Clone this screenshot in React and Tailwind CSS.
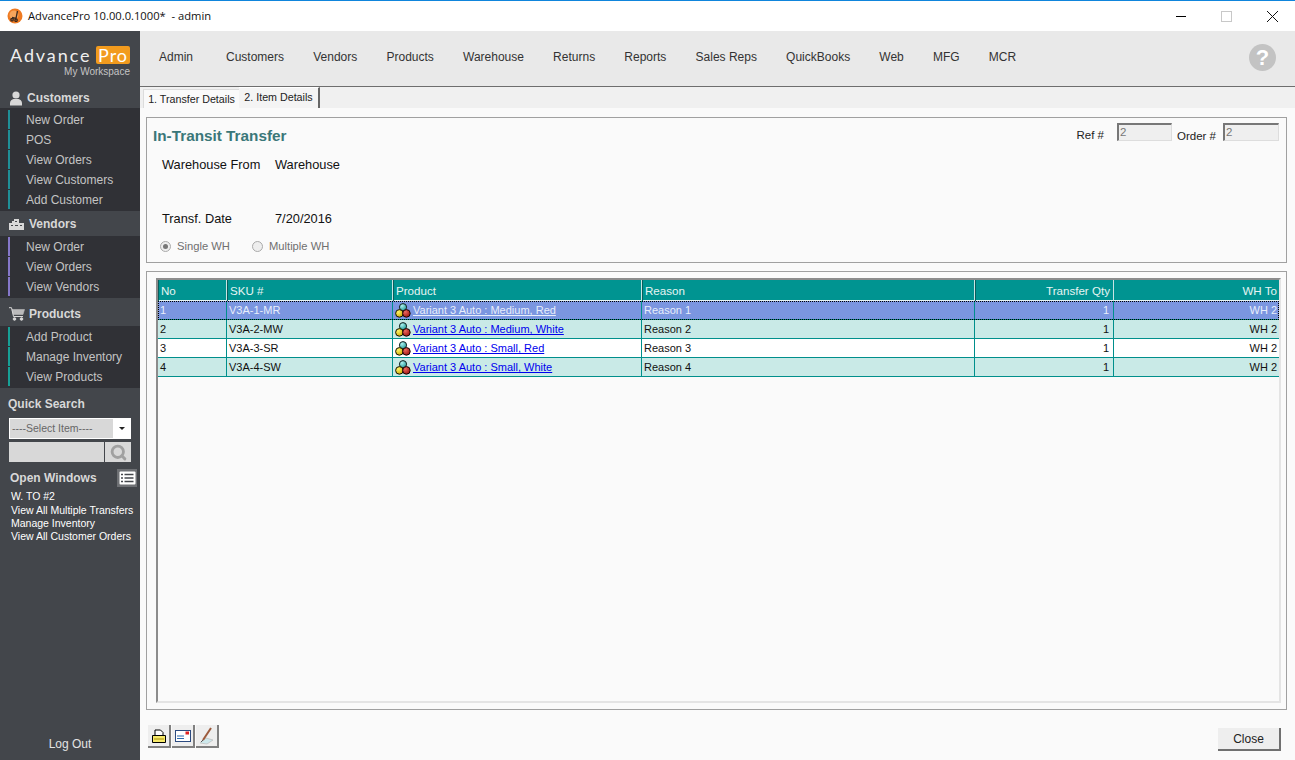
import React from "react";
import { Search } from "lucide-react";

function Group({ icon, title, items, bar, h, iw, hx, ix }) {
  return (
    <div>
      <div className={`flex items-center pl-[9px] font-bold text-[12px] text-[#d8d8d8] ${h} ${hx}`}>
        <span className={`flex justify-start ${iw}`}>{icon}</span>
        <span>{title}</span>
      </div>
      <div className={`bg-[#303136] pb-px ${ix}`}>
        {items.map((t) => (
          <div key={t} className="flex h-[20px] pl-[8px]">
            <div className={`w-[2px] h-[19px] ${bar}`} />
            <div className="pl-[16px] text-[12px] leading-[20px] text-[#c4c4c4]">{t}</div>
          </div>
        ))}
      </div>
    </div>
  );
}

function ProductIcon() {
  return (
    <svg width="16" height="15" viewBox="0 0 16 15" className="shrink-0">
      <defs>
        <radialGradient id="gc" cx="35%" cy="30%" r="75%"><stop offset="0" stopColor="#aef2f0" /><stop offset="1" stopColor="#1f9795" /></radialGradient>
        <radialGradient id="gy" cx="35%" cy="30%" r="75%"><stop offset="0" stopColor="#fff56a" /><stop offset="1" stopColor="#d0ac00" /></radialGradient>
        <radialGradient id="gr" cx="35%" cy="30%" r="75%"><stop offset="0" stopColor="#ee6a60" /><stop offset="1" stopColor="#a01410" /></radialGradient>
      </defs>
      <circle cx="8" cy="4.2" r="3.6" fill="url(#gc)" stroke="#14201f" strokeWidth="1" />
      <circle cx="4.4" cy="10.4" r="3.8" fill="url(#gy)" stroke="#141208" strokeWidth="1" />
      <circle cx="11.4" cy="10.4" r="3.8" fill="url(#gr)" stroke="#140808" strokeWidth="1" />
    </svg>
  );
}

const cols = "grid grid-cols-[69px_166px_249px_333px_139px_1fr]";
const rows = [
  ["1", "V3A-1-MR", "Variant 3 Auto : Medium, Red", "Reason 1"],
  ["2", "V3A-2-MW", "Variant 3 Auto : Medium, White", "Reason 2"],
  ["3", "V3A-3-SR", "Variant 3 Auto : Small, Red", "Reason 3"],
  ["4", "V3A-4-SW", "Variant 3 Auto : Small, White", "Reason 4"],
];

function Row({ r, i }) {
  const sel = i === 0;
  const bg = sel ? "bg-[#7b96e0] text-[#e8eefc]" : i % 2 === 1 ? "bg-[#c9eae7] text-[#111]" : "bg-white text-[#111]";
  const cell = "h-[18px] leading-[18px] px-[2px] truncate border-r border-[#008f8c]";
  return (
    <div className={`${cols} ${bg} h-[19px] border-b border-[#008f8c] text-[11px] ${sel ? "outline-1 outline-dotted outline-black -outline-offset-1" : ""}`}>
      <div className={cell}>{r[0]}</div>
      <div className={cell}>{r[1]}</div>
      <div className={`${cell} flex items-center gap-[2px]`}>
        <ProductIcon />
        <span className={`underline ${sel ? "text-[#e8eefc]" : "text-[#0000ee]"}`}>{r[2]}</span>
      </div>
      <div className={cell}>{r[3]}</div>
      <div className="h-[18px] leading-[18px] pr-[4px] text-right border-r border-[#008f8c]">1</div>
      <div className="h-[18px] leading-[18px] px-[2px] text-right">WH 2</div>
    </div>
  );
}

function ToolBtn({ children }) {
  return (
    <div className="w-[23px] h-[23px] bg-[#eeeeee] border-r-2 border-b-2 border-[#808080] flex items-center justify-center">
      {children}
    </div>
  );
}

export default function App() {
  const nav = ["Customers", "Vendors", "Products", "Warehouse", "Returns", "Reports", "Sales Reps", "QuickBooks", "Web", "MFG", "MCR"];
  return (
    <div className="w-[1295px] h-[760px] overflow-hidden flex flex-col bg-white text-[#111] font-['Liberation_Sans',Arial,sans-serif]">
      {/* Title bar */}
      <div className="h-[31px] shrink-0 bg-white border-t border-[#0f85dc] flex items-center">
        <svg width="16" height="16" viewBox="0 0 16 16" className="ml-[7px] mr-[5px]">
          <circle cx="8" cy="8" r="7.5" fill="#ee7a22" />
          <circle cx="7" cy="7" r="4.5" fill="#f6a55c" />
          <path d="M10.5 3 9 10.5 5 9.5 M5 10.5a1.2 1.2 0 1 0 .1 0 M9 11a1.2 1.2 0 1 0 .1 0" stroke="#3a2a20" strokeWidth="1.3" fill="none" />
        </svg>
        <span className="text-[11.2px] whitespace-pre font-['Open_Sans',sans-serif] text-[#111]">AdvancePro 10.00.0.1000*  - admin</span>
        <div className="ml-auto flex items-center">
          <div className="w-[10px] h-px bg-black mr-[35px]" />
          <div className="w-[11px] h-[11px] border border-[#c8c8c8] mr-[35px]" />
          <svg width="11" height="11" viewBox="0 0 11 11" className="mr-[17px]">
            <path d="M0 0 11 11M11 0 0 11" stroke="#111" strokeWidth="1" />
          </svg>
        </div>
      </div>

      <div className="flex-1 flex min-h-0">
        {/* Sidebar */}
        <div className="w-[140px] shrink-0 bg-[#43464b] flex flex-col">
          <div className="h-[57px] pt-[15px] pl-[10px] pr-[10px]">
            <div className="flex items-center h-[18px]">
              <span className="text-[#efefef] text-[18px] tracking-[1.9px] font-['Lato',sans-serif] leading-none w-[86px]">Advance</span>
              <span className="bg-[#f29b1e] text-white text-[18px] tracking-[1px] font-['Lato',sans-serif] leading-[18px] px-[2px] rounded-[2px] w-[34px]">Pro</span>
            </div>
            <div className="text-right text-[10px] leading-[13px] mt-[1px] text-[#c4c4c4]">My Workspace</div>
          </div>
          <Group
            title="Customers"
            h="h-[20px]"
            hx=""
            ix="pt-[2px]"
            iw="w-[18px]"
            bar="bg-[#1f8f97]"
            icon={
              <svg width="14" height="15" viewBox="0 0 14 15">
                <circle cx="7" cy="4" r="3.6" fill="#d8d8d8" />
                <path d="M1 14.5v-2.5C1 9.5 3 8.5 4.5 8h5C11 8.5 13 9.5 13 12v2.5z" fill="#d8d8d8" />
              </svg>
            }
            items={["New Order", "POS", "View Orders", "View Customers", "Add Customer"]}
          />
          <Group
            title="Vendors"
            h="h-[25px]"
            hx=""
            ix="pt-px"
            iw="w-[20px]"
            bar="bg-[#8577c9]"
            icon={
              <svg width="15" height="12" viewBox="0 0 15 12">
                <path d="M0 5h3V3h2V1h5v4h5v7H0z" fill="#d8d8d8" />
                <path d="M2 7.5h2M6 7.5h3M11 7.5h2M6 3.5h2" stroke="#43464b" strokeWidth="1" />
              </svg>
            }
            items={["New Order", "View Orders", "View Vendors"]}
          />
          <Group
            title="Products"
            h="h-[28px]"
            hx="pt-[3px]"
            ix="pt-px"
            iw="w-[20px]"
            bar="bg-[#17a096]"
            icon={
              <svg width="16" height="14" viewBox="0 0 16 14" fill="none" stroke="#d8d8d8">
                <path d="M0 .7h2.5L4.5 9.5H14" strokeWidth="1" />
                <path d="M3 2.5h12.5L14 7.5H4.2z" fill="#d8d8d8" opacity=".8" strokeWidth=".6" />
                <circle cx="5.5" cy="12" r="1.3" fill="#d8d8d8" />
                <circle cx="12.5" cy="12" r="1.3" fill="#d8d8d8" />
              </svg>
            }
            items={["Add Product", "Manage Inventory", "View Products"]}
          />
          <div className="pl-[8px] pt-[9px] text-[12px] font-bold leading-[14px] text-[#d8d8d8]">Quick Search</div>
          <div className="ml-[9px] mt-[7px] w-[122px] h-[21px] border border-white bg-[#d8d8d8] flex text-[10.5px] text-[#666] leading-[18px]">
            <span className="flex-1 pl-[2px]">----Select Item----</span>
            <span className="w-[17px] bg-white flex items-center justify-center">
              <span className="w-0 h-0 border-x-[3px] border-x-transparent border-t-[3px] border-t-[#222]" />
            </span>
          </div>
          <div className="ml-[9px] mt-[3px] flex gap-px h-[20px] w-[122px]">
            <div className="w-[95px] bg-[#d8d8d8]" />
            <div className="w-[26px] bg-[#d8d8d8] flex items-center justify-center">
              <Search size={17} strokeWidth={4} className="text-[#a0a0a0]" />
            </div>
          </div>
          <div className="flex items-center pl-[10px] mt-[7px] h-[18px]">
            <span className="text-[12px] font-bold text-[#d8d8d8]">Open Windows</span>
            <div className="ml-auto mr-[3px] w-[20px] h-[18px] bg-[#6e7074] flex items-center justify-center">
              <svg width="17" height="14" viewBox="0 0 17 14">
                <rect x="0.5" y="0.5" width="16" height="13" rx="1" fill="#fff" />
                <path d="M2 3.5h2M5.5 3.5h9M2 7h2M5.5 7h9M2 10.5h2M5.5 10.5h9" stroke="#44474c" strokeWidth="1.4" />
              </svg>
            </div>
          </div>
          <div className="pl-[11px] mt-[3px] text-[10.5px] leading-[13px] text-white">
            <div className="h-[14px]">W. TO #2</div>
            <div className="whitespace-nowrap">View All Multiple Transfers</div>
            <div>Manage Inventory</div>
            <div className="whitespace-nowrap">View All Customer Orders</div>
          </div>
          <div className="mt-auto h-[25px] text-center text-[12px] text-[#e4e4e4]">Log Out</div>
        </div>

        {/* Main */}
        <div className="flex-1 min-w-0 flex flex-col">
          <div className="h-[56px] shrink-0 bg-[#e9e9e9] border-b border-[#6e6e6e] flex items-center pl-[19px] pb-[4px] text-[12px] text-[#333]">
            <span className="mr-[33px]">Admin</span>
            <div className="flex gap-[29.2px]">
              {nav.map((t) => (
                <span key={t}>{t}</span>
              ))}
            </div>
            <div className="ml-auto mr-[19px] mt-[2px] w-[27px] h-[27px] rounded-full bg-[#c3c3c3] text-white font-bold text-[22px] leading-[27px] text-center">?</div>
          </div>

          <div className="h-[22px] shrink-0 bg-[#f0f0f0] flex items-end pl-[3px] border-b border-[#fafafa]">
            <div className="h-[19px] w-[96px] bg-[#fafafa] border-t border-l border-[#dcdcdc] text-center text-[10.7px] leading-[19px] text-[#222]">1. Transfer Details</div>
            <div className="h-[21px] w-[81px] bg-[#f4f4f4] border-r-2 border-[#666] border-t border-t-white text-center text-[10.7px] leading-[18px] text-[#222]">2. Item Details</div>
          </div>

          <div className="flex-1 min-h-0 bg-[#fafafa] flex flex-col pl-[6px] pr-[8px]">
            {/* Form group */}
            <div className="mt-[8px] h-[146px] shrink-0 border border-[#a0a0a0] px-[6px] flex flex-col">
              <div className="flex">
                <div className="flex-1 mt-[9px] text-[15.3px] leading-[17px] font-bold text-[#3a7779]">In-Transit Transfer</div>
                <div className="flex items-start mt-[5px] text-[11.5px] text-[#222]">
                  <span className="mt-[4px] mr-[13px]">Ref #</span>
                  <div className="w-[55px] h-[18px] bg-[#efefef] border-t-2 border-l-2 border-[#777] border-r border-b border-r-[#ddd] border-b-[#ddd] text-[#777] leading-[14px] pl-px">2</div>
                  <span className="mt-[5px] ml-[5px] mr-[7px]">Order #</span>
                  <div className="w-[56px] h-[18px] bg-[#efefef] border-t-2 border-l-2 border-[#777] border-r border-b border-r-[#ddd] border-b-[#ddd] text-[#777] leading-[14px] pl-px mr-[1px]">2</div>
                </div>
              </div>
              <div className="flex mt-[12px] text-[12.8px] leading-[15px] text-[#111] pl-[9px]">
                <span className="w-[113px]">Warehouse From</span><span>Warehouse</span>
              </div>
              <div className="flex mt-[39px] text-[12.8px] leading-[15px] text-[#111] pl-[9px]">
                <span className="w-[113px]">Transf. Date</span><span>7/20/2016</span>
              </div>
              <div className="flex items-center mt-[13px] text-[11.2px] leading-[14px] text-[#6f6f6f] pl-[7px]">
                <span className="w-[11px] h-[11px] rounded-full border border-[#aaa] bg-[#eee] flex items-center justify-center mr-[6px]">
                  <span className="w-[5px] h-[5px] rounded-full bg-[#777]" />
                </span>
                <span className="w-[75px]">Single WH</span>
                <span className="w-[11px] h-[11px] rounded-full border border-[#aaa] bg-[#eee] mr-[6px]" />
                <span>Multiple WH</span>
              </div>
            </div>

            {/* Table group */}
            <div className="mt-[8px] h-[439px] shrink-0 border border-[#a0a0a0] pl-[9px] pr-[5px] pt-[6px]">
              <div className="h-[425px] border-2 border-[#8c8c8c] border-r-[#e4e4e4] border-b-[#e4e4e4] bg-[#fafafa]">
                <div className={`${cols} h-[21px] bg-[#009491] border-b border-[#e8f4f4] text-[11.6px] text-[#e6f4f3]`}>
                  {["No", "SKU #", "Product", "Reason"].map((t) => (
                    <div key={t} className="px-[2px] leading-[21px] border-r border-[#c8e4e3] border-l border-l-[#0a5e5c]">{t}</div>
                  ))}
                  <div className="pl-[2px] pr-[3px] leading-[21px] text-right border-r border-[#c8e4e3] border-l border-l-[#0a5e5c]">Transfer Qty</div>
                  <div className="px-[2px] leading-[21px] text-right">WH To</div>
                </div>
                {rows.map((r, i) => <Row key={i} r={r} i={i} />)}
              </div>
            </div>

            {/* Bottom */}
            <div className="flex items-start pt-[15px] pl-[2px]">
              <div className="flex gap-[1px]">
                <ToolBtn>
                  <svg width="14" height="14" viewBox="0 0 14 14">
                    <path d="M3 7V1h5.5L11 3.5V7" fill="#fff" stroke="#000" />
                    <path d="M.5 6.5h13v7H.5z" fill="#f7ea6a" stroke="#000" />
                    <path d="M2 10h10" stroke="#c2ae2c" strokeWidth="1.5" />
                  </svg>
                </ToolBtn>
                <ToolBtn>
                  <svg width="16" height="12" viewBox="0 0 16 12">
                    <rect x="0.5" y="0.5" width="15" height="11" fill="#fff" stroke="#2b4a80" />
                    <rect x="10.5" y="1.5" width="3.5" height="3" fill="#e02020" />
                    <path d="M2 6h7M2 8.5h7" stroke="#2b6ab0" strokeWidth="1.2" />
                  </svg>
                </ToolBtn>
                <ToolBtn>
                  <svg width="19" height="19" viewBox="0 0 19 19">
                    <path d="M3 17 9 12 16 14 10 18z" fill="#cde8ec" stroke="#bbb" strokeWidth="0.7" />
                    <path d="M6 14 14 2" stroke="#9c5a3c" strokeWidth="2" />
                    <path d="M4 16l2-2" stroke="#555" strokeWidth="1" />
                  </svg>
                </ToolBtn>
              </div>
              <div className="ml-auto mt-[3px] mr-[6px] w-[63px] h-[23px] bg-[#eeeeee] border-r-2 border-b-2 border-[#707070] text-center text-[12px] leading-[22px] text-[#222]">Close</div>
            </div>
          </div>
        </div>
      </div>
    </div>
  );
}
